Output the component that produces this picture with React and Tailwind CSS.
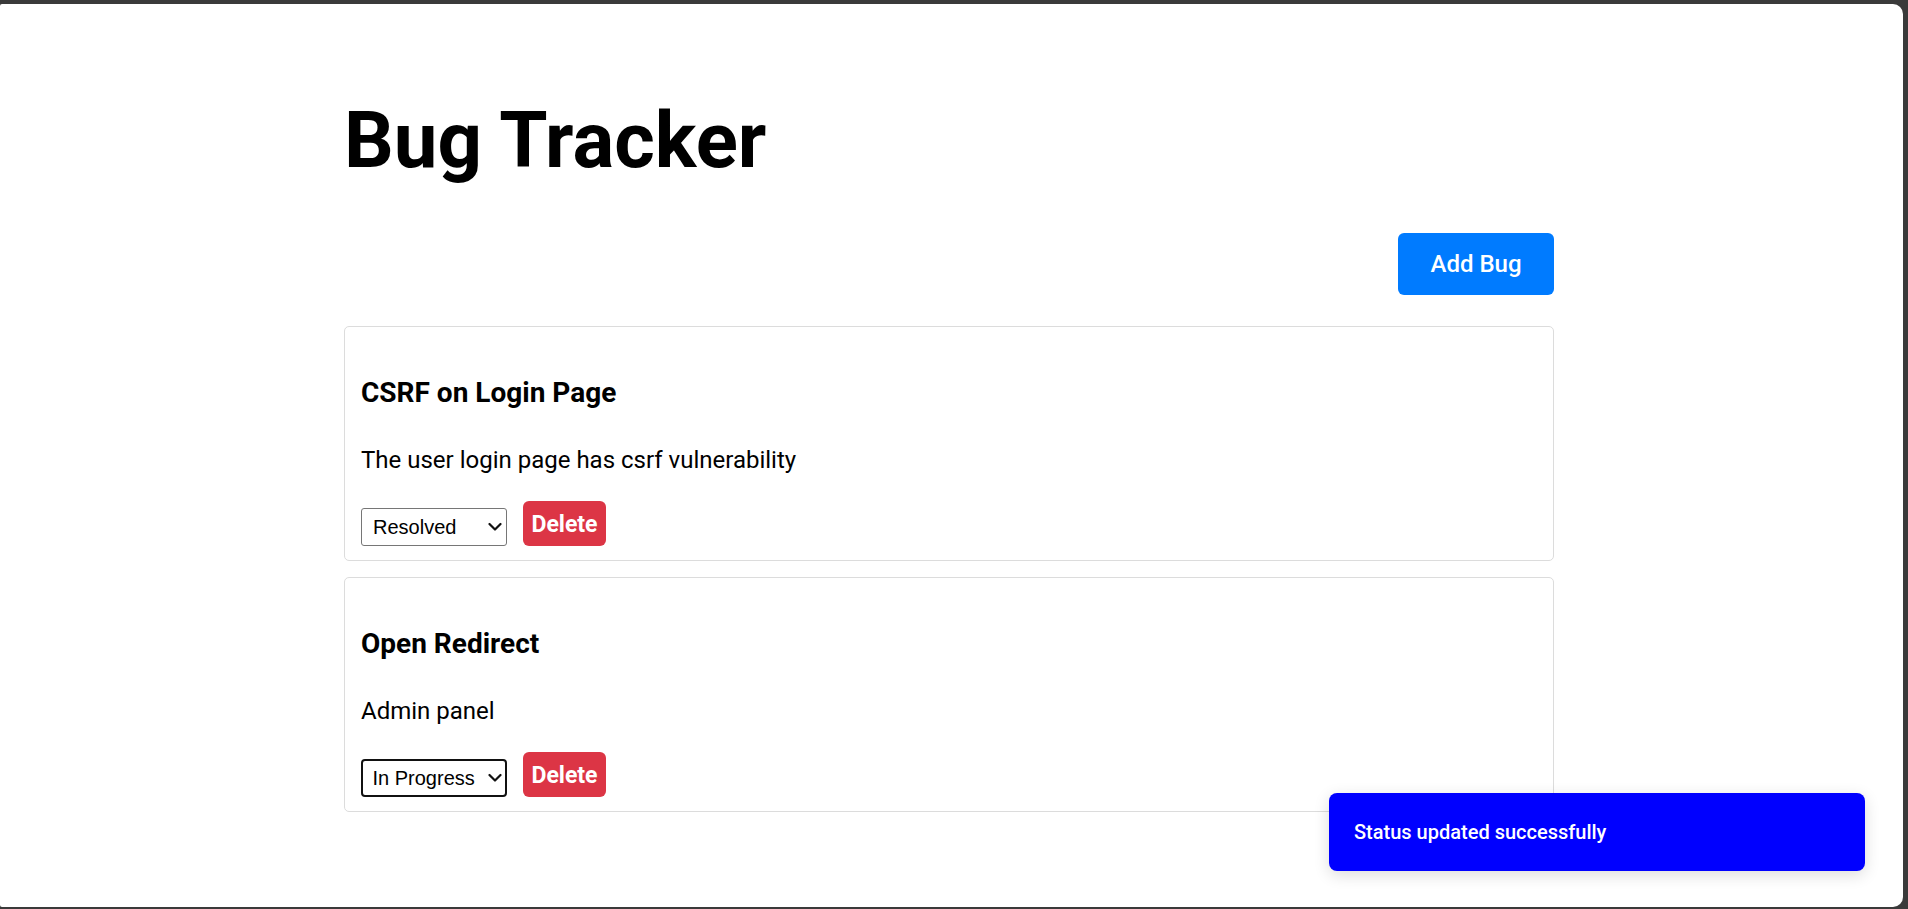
import { useState } from "react";

const initialBugs = [
  { id: 1, title: "CSRF on Login Page", description: "The user login page has csrf vulnerability", status: "Resolved" },
  { id: 2, title: "Open Redirect", description: "Admin panel", status: "In Progress" },
];

const statuses = ["Open", "In Progress", "Resolved"];

function Chevron() {
  return (
    <svg width="14" height="9" viewBox="0 0 14 9" fill="none" className="pointer-events-none absolute right-[5px] top-1/2 -translate-y-1/2">
      <path d="M1.5 1.5 L7 7 L12.5 1.5" stroke="#111" strokeWidth="2.2" strokeLinecap="round" strokeLinejoin="round" />
    </svg>
  );
}

export default function App() {
  const [bugs, setBugs] = useState(initialBugs);
  const [toast, setToast] = useState("Status updated successfully");

  const changeStatus = (id, status) => {
    setBugs(prev => prev.map(b => (b.id === id ? { ...b, status } : b)));
    setToast("Status updated successfully");
  };

  const removeBug = (id) => {
    setBugs(prev => prev.filter(b => b.id !== id));
    setToast("Bug deleted successfully");
  };

  return (
    <div className="h-screen flex bg-[#3a3a3a] pt-[4px] pr-[5px] pb-[2px] overflow-hidden font-['Roboto','Noto_Sans',sans-serif] text-black">
      <div className="relative flex-1 bg-white rounded-l-[2px] rounded-r-[10px]">
        <div className="ml-[344px] w-[1210px] pt-[98px]">
          <h1 className="text-[78px] leading-[78px] font-bold">Bug Tracker</h1>

          <div className="mt-[53px] flex justify-end">
            <button className="w-[156px] h-[62px] flex items-center justify-center rounded-[6px] bg-[#007bff] text-white text-[24px] font-medium">
              Add Bug
            </button>
          </div>

          <div className="mt-[31px] flex flex-col gap-4">
            {bugs.map((bug, i) => (
              <div key={bug.id} className="border border-[#dcdcdc] rounded-[5px] px-4 pt-[50px] pb-[14px]">
                <h3 className="text-[28px] leading-[32px] font-bold">{bug.title}</h3>
                <p className="mt-[35px] text-[24px] leading-[32px]">{bug.description}</p>
                <div className="mt-[25px] flex items-end gap-4">
                  <div className="relative">
                    <select
                      value={bug.status}
                      onChange={e => changeStatus(bug.id, e.target.value)}
                      className={`appearance-none w-[146px] h-[38px] bg-white text-black text-[20px] font-['Liberation_Sans',Arial,sans-serif] outline-none ${i === 1 ? "border-[2.5px] border-[#111] rounded-[4px] pl-[9.5px]" : "border border-[#767676] rounded-[3px] pl-[11px]"}`}
                    >
                      {statuses.map(s => (
                        <option key={s} value={s}>{s}</option>
                      ))}
                    </select>
                    <Chevron />
                  </div>
                  <button
                    onClick={() => removeBug(bug.id)}
                    className="h-[45px] w-[83px] pt-[3px] flex items-center justify-center rounded-[6px] bg-[#dc3545] text-white text-[23px] font-bold"
                  >
                    Delete
                  </button>
                </div>
              </div>
            ))}
          </div>
        </div>

        {toast && (
          <div className="absolute right-[38px] bottom-[36px] w-[536px] h-[78px] pl-[25px] flex items-center rounded-[8px] bg-[#0000ff] text-white text-[20px] font-medium shadow-[0_4px_16px_rgba(0,0,0,0.14)]">
            {toast}
          </div>
        )}
      </div>
    </div>
  );
}
